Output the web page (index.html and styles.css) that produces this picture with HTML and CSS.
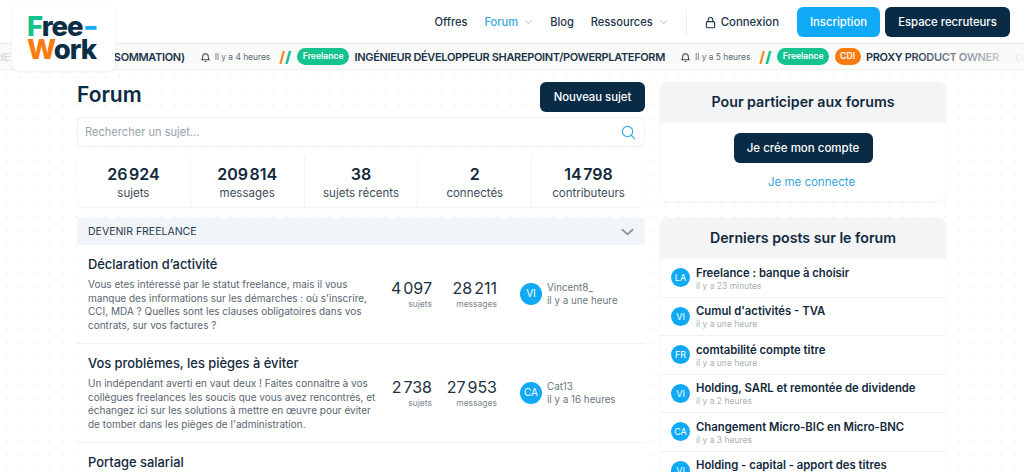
FILE: index.html
```html
<!DOCTYPE html>
<html lang="fr">
<head>
<meta charset="utf-8">
<title>Forum - Free-Work</title>
<link rel="stylesheet" href="styles.css">
</head>
<body>
<header class="top">
  <a class="logo"><span class="logo-line"><span class="c-green">F</span>ree<span class="c-blue dash">-</span></span><span class="logo-line"><span class="c-orange">W</span>ork</span></a>
  <nav class="nav">
    <a class="nav-link">Offres</a>
    <a class="nav-link active">Forum <svg class="chev" viewBox="0 0 10 6"><path d="M1 1l4 4 4-4"/></svg></a>
    <a class="nav-link">Blog</a>
    <a class="nav-link">Ressources <svg class="chev" viewBox="0 0 10 6"><path d="M1 1l4 4 4-4"/></svg></a>
    <span class="nav-sep"></span>
    <a class="nav-link login"><svg class="lock" viewBox="0 0 12 14"><rect x="1.5" y="6" width="9" height="6.8" rx="1.2"/><path d="M3.5 6V4a2.5 2.5 0 0 1 5 0v2"/></svg>Connexion</a>
    <a class="btn btn-blue">Inscription</a>
    <a class="btn btn-dark">Espace recruteurs</a>
  </nav>
</header>
<div class="ticker">
  <div class="track">
    <span class="tick-ghost">RIE</span>
    <span class="tick-title">SOMMATION)</span>
    <span class="tick-time"><svg class="bell" viewBox="0 0 12 13"><path d="M2 9.5c.8-.8 1-1.5 1-3.5a3 3 0 0 1 6 0c0 2 .2 2.7 1 3.5zM5 11.500h2"/></svg>Il y a 4 heures</span>
    <span class="slashes"><i>/</i><b>/</b></span>
    <span class="pill pill-green">Freelance</span>
    <span class="tick-title">INGÉNIEUR DÉVELOPPEUR SHAREPOINT/POWERPLATEFORM</span>
    <span class="tick-time"><svg class="bell" viewBox="0 0 12 13"><path d="M2 9.5c.8-.8 1-1.5 1-3.5a3 3 0 0 1 6 0c0 2 .2 2.7 1 3.5zM5 11.500h2"/></svg>Il y a 5 heures</span>
    <span class="slashes"><i>/</i><b>/</b></span>
    <span class="pill pill-green">Freelance</span>
    <span class="pill pill-orange">CDI</span>
    <span class="tick-title">PROXY PRODUCT OWNER</span>
    <svg class="bell" viewBox="0 0 12 13"><path d="M2 9.5c.8-.8 1-1.5 1-3.5a3 3 0 0 1 6 0c0 2 .2 2.7 1 3.5zM5 11.500h2"/></svg>
  </div>
  <div class="fade"></div>
</div>
<main class="page">
  <section class="left">
    <div class="head-row">
      <h1>Forum</h1>
      <a class="btn btn-dark btn-new">Nouveau sujet</a>
    </div>
    <div class="search"><span>Rechercher un sujet...</span><svg viewBox="0 0 16 16"><circle cx="7" cy="7" r="5.5"/><path d="M11 11l4 4"/></svg></div>
    <div class="stats">
      <div class="stat"><strong>26 924</strong><span>sujets</span></div>
      <div class="stat"><strong>209 814</strong><span>messages</span></div>
      <div class="stat"><strong>38</strong><span>sujets récents</span></div>
      <div class="stat"><strong>2</strong><span>connectés</span></div>
      <div class="stat"><strong>14 798</strong><span>contributeurs</span></div>
    </div>
    <div class="cat">
      <div class="cat-head"><span>DEVENIR FREELANCE</span><svg viewBox="0 0 14 8"><path d="M1 1l6 5.5L13 1"/></svg></div>
      <article class="row">
        <div class="row-text">
          <h2>Déclaration d’activité</h2>
          <p>Vous etes intéressé par le statut freelance, mais il vous manque des informations sur les démarches : où s'inscrire, CCI, MDA ? Quelles sont les clauses obligatoires dans vos contrats, sur vos factures ?</p>
        </div>
        <div class="num"><b>4 097</b><span>sujets</span></div>
        <div class="num num-m"><b>28 211</b><span>messages</span></div>
        <div class="last"><span class="avatar">VI</span><div><div>Vincent8_</div><div>il y a une heure</div></div></div>
      </article>
      <article class="row">
        <div class="row-text">
          <h2>Vos problèmes, les pièges à éviter</h2>
          <p>Un indépendant averti en vaut deux ! Faites connaître à vos collègues freelances les soucis que vous avez rencontrés, et échangez ici sur les solutions à mettre en œuvre pour éviter de tomber dans les pièges de l'administration.</p>
        </div>
        <div class="num"><b>2 738</b><span>sujets</span></div>
        <div class="num num-m"><b>27 953</b><span>messages</span></div>
        <div class="last"><span class="avatar">CA</span><div><div>Cat13</div><div>il y a 16 heures</div></div></div>
      </article>
      <article class="row">
        <div class="row-text"><h2>Portage salarial</h2></div>
      </article>
    </div>
  </section>
  <aside class="right">
    <div class="card">
      <h3>Pour participer aux forums</h3>
      <div class="join">
        <a class="btn btn-dark btn-join">Je crée mon compte</a>
        <a class="connect">Je me connecte</a>
      </div>
    </div>
    <div class="card">
      <h3>Derniers posts sur le forum</h3>
      <div class="post"><span class="avatar small">LA</span><div><h4>Freelance : banque à choisir</h4><small>il y a 23 minutes</small></div></div>
      <div class="post"><span class="avatar small">VI</span><div><h4>Cumul d'activités - TVA</h4><small>il y a une heure</small></div></div>
      <div class="post"><span class="avatar small">FR</span><div><h4>comtabilité compte titre</h4><small>il y a une heure</small></div></div>
      <div class="post"><span class="avatar small">VI</span><div><h4>Holding, SARL et remontée de dividende</h4><small>il y a 2 heures</small></div></div>
      <div class="post"><span class="avatar small">CA</span><div><h4>Changement Micro-BIC en Micro-BNC</h4><small>il y a 3 heures</small></div></div>
      <div class="post"><span class="avatar small">VI</span><div><h4>Holding - capital - apport des titres</h4></div></div>
    </div>
  </aside>
</main>
</body>
</html>
```
FILE: styles.css
```css
* { box-sizing: border-box; }
html, body { margin: 0; height: 472px; overflow: hidden; }
body {
  font-family: Inter, "Liberation Sans", sans-serif;
  color: #0a2a42;
  background-color: #fff;
  background-image: radial-gradient(#f3f3f5 1px, transparent 1.2px);
  background-size: 14px 14px;
}
a { color: inherit; text-decoration: none; }
.top {
  position: relative;
  height: 44px;
  background: #fff;
  border-bottom: 1px solid #ececee;
  display: flex;
  justify-content: flex-end;
}
.logo {
  position: absolute;
  z-index: 3;
  left: 12px;
  top: 6px;
  width: 103px;
  height: 65px;
  background: #fff;
  border-radius: 6px;
  box-shadow: 0 1px 3px rgba(0,0,0,.08);
  padding: 9px 0 0 15px;
  font-family: Inter, sans-serif;
  font-weight: 800;
  font-size: 27.5px;
  line-height: 23px;
  color: #0b2e46;
  display: flex;
  flex-direction: column;
}
.logo-line { display: block; letter-spacing: -1px; height: 23px; }
.dash { display: inline-block; transform: scaleX(1.2); transform-origin: left center; }
.c-green { color: #14c38e; }
.c-blue { color: #1aa9f2; }
.c-orange { color: #f97b12; }
.nav {
  display: flex;
  align-items: center;
  padding-right: 14px;
  font-size: 11.1px;
  font-weight: 500;
  height: 38px;
  margin-top: 3px;
}
.nav-link { color: #1b3447; display: flex; align-items: center; gap: 6px; margin-right: 17px; }
.nav-link.active { color: #36a6de; }
.chev { width: 9px; height: 6px; fill: none; stroke: #a9b2b9; stroke-width: 1; }
.nav-sep { width: 1px; height: 26px; background: #eceef0; margin-left: 1px; margin-right: 18px; }
.login { gap: 5px; margin-right: 18px; font-size: 11.4px; }
.lock { width: 11px; height: 13px; fill: none; stroke: #1b3447; stroke-width: 1.2; }
.btn {
  display: flex;
  align-items: center;
  justify-content: center;
  height: 30px;
  border-radius: 6px;
  font-size: 11.3px;
  font-weight: 500;
  color: #fff;
}
.btn-blue { background: #10a9f5; width: 83px; margin-right: 5px; }
.btn-dark { background: #0a2b45; }
.nav .btn-dark { width: 125px; }
.ticker {
  position: relative;
  height: 26px;
  background: #fafafa;
  border-bottom: 1px solid #efefef;
  overflow: hidden;
}
.track {
  display: flex;
  align-items: center;
  height: 25px;
  margin-left: -6px;
  white-space: nowrap;
}
.tick-ghost { font-size: 11px; font-weight: 600; letter-spacing: -.35px; color: #d9dbde; margin-right: 104px; }
.tick-title { font-size: 11px; letter-spacing: -.35px; font-weight: 600; color: #1b3447; margin-right: 15px; }
.tick-time { display: flex; align-items: center; gap: 4px; font-size: 8.4px; color: #5c6b77; margin-right: 9px; }
.bell { width: 11px; height: 12px; flex: none; fill: none; stroke: #33475a; stroke-width: 1.1; }
.slashes { font-size: 15px; font-weight: 700; margin-right: 6px; display: flex; }
.slashes i { color: #f97b12; font-style: normal; }
.slashes b { color: #14c38e; }
.pill {
  height: 17px;
  line-height: 17px;
  padding: 0 5.5px;
  border-radius: 9px;
  font-size: 8.6px;
  font-weight: 600;
  color: #fff;
  margin-right: 5.5px;
}
.pill-green { background: #14c38e; }
.pill-orange { background: #f97b12; }
.fade {
  position: absolute;
  right: 0;
  top: 0;
  width: 124px;
  height: 25px;
  background: linear-gradient(to right, rgba(250,250,250,0), rgba(250,250,250,.95));
}
.page {
  display: flex;
  gap: 15px;
  width: 869px;
  margin: 12px 0 0 77px;
}
.left { width: 568px; flex: none; }
.right { width: 286px; flex: none; }
.head-row { display: flex; justify-content: space-between; align-items: flex-start; height: 35px; }
h1 { margin: 0; font-size: 21px; line-height: 26px; font-weight: 600; color: #0b2b42; }
.btn-new { width: 105px; }
.search {
  height: 30px;
  background: #fff;
  border: 1px solid #eef0f2;
  border-radius: 6px;
  display: flex;
  align-items: center;
  justify-content: space-between;
  padding: 0 8px 0 7px;
  font-size: 11.1px;
  color: #9aa3aa;
}
.search svg { width: 15px; height: 15px; fill: none; stroke: #36a6de; stroke-width: 1.2; }
.stats {
  display: flex;
  height: 50px;
  margin-top: 10px;
  background: #fff;
  border-radius: 6px;
  box-shadow: 0 1px 2px rgba(0,0,0,.06);
}
.stat {
  flex: 1;
  display: flex;
  flex-direction: column;
  align-items: center;
  padding-top: 6px;
  border-left: 1px solid #f1f2f4;
}
.stat:first-child { border-left: 0; }
.stat strong { font-size: 16px; line-height: 22px; font-weight: 600; color: #12293b; word-spacing: -2.5px; }
.stat span { font-size: 11.5px; line-height: 16px; color: #3d4d5a; }
.cat { margin-top: 11px; background: #fff; }
.cat-head {
  height: 27px;
  background: #f1f4f8;
  border-radius: 4px 4px 0 0;
  display: flex;
  align-items: center;
  justify-content: space-between;
  padding: 0 11px;
  font-size: 10.5px;
  color: #263c4e;
}
.cat-head svg { width: 13px; height: 8px; fill: none; stroke: #8d9499; stroke-width: 2; }
.row {
  display: flex;
  align-items: center;
  height: 99px;
  padding: 0 11px;
  border-bottom: 1px solid #f1f2f4;
}
.row-text { width: 290px; flex: none; align-self: flex-start; padding-top: 11px; }
h2 { margin: 0 0 5px; font-size: 12.9px; line-height: 17px; font-weight: 500; color: #12293b; }
.row p { margin: 0; font-size: 10px; line-height: 13.7px; color: #5a6670; }
.num { width: 46px; margin-left: 8px; display: flex; flex-direction: column; align-items: flex-end; }
.num-m { margin-left: 15px; width: 50px; }
.num b { font-size: 16px; font-weight: 400; line-height: 20px; color: #1d3140; white-space: nowrap; word-spacing: -2.5px; }
.num span { font-size: 8.5px; line-height: 13px; color: #7c8790; }
.last { display: flex; align-items: center; gap: 5px; margin-left: 23px; font-size: 9.8px; line-height: 13.5px; color: #6a7680; }
.avatar {
  width: 22px;
  height: 22px;
  flex: none;
  border-radius: 50%;
  background: #10a9f5;
  color: #fff;
  font-size: 10px;
  display: flex;
  align-items: center;
  justify-content: center;
}
.card {
  background: #fff;
  border-radius: 8px;
  box-shadow: 0 1px 3px rgba(0,0,0,.06);
  margin-bottom: 17px;
  overflow: hidden;
}
h3 {
  margin: 0;
  height: 41px;
  background: #f3f4f6;
  text-align: center;
  font-size: 14.2px;
  line-height: 40px;
  font-weight: 600;
  color: #12293b;
}
.join { height: 78px; display: flex; flex-direction: column; align-items: center; padding-top: 10px; }
.btn-join { width: 139px; height: 30px; font-size: 11.5px; }
.connect { font-size: 11.5px; color: #36a6de; margin-top: 12px; margin-left: 17px; }
.post {
  display: flex;
  align-items: center;
  gap: 6px;
  height: 38.5px;
  padding: 0 11px;
  border-bottom: 1px solid #f1f2f4;
}
.post > div { min-height: 28px; padding-top: 2px; }
.avatar.small { width: 19px; height: 19px; font-size: 9px; }
h4 { margin: 0; font-size: 11.3px; line-height: 15px; font-weight: 600; color: #12293b; white-space: nowrap; }
small { display: block; font-size: 8.5px; line-height: 11px; color: #a9afb4; }
```
